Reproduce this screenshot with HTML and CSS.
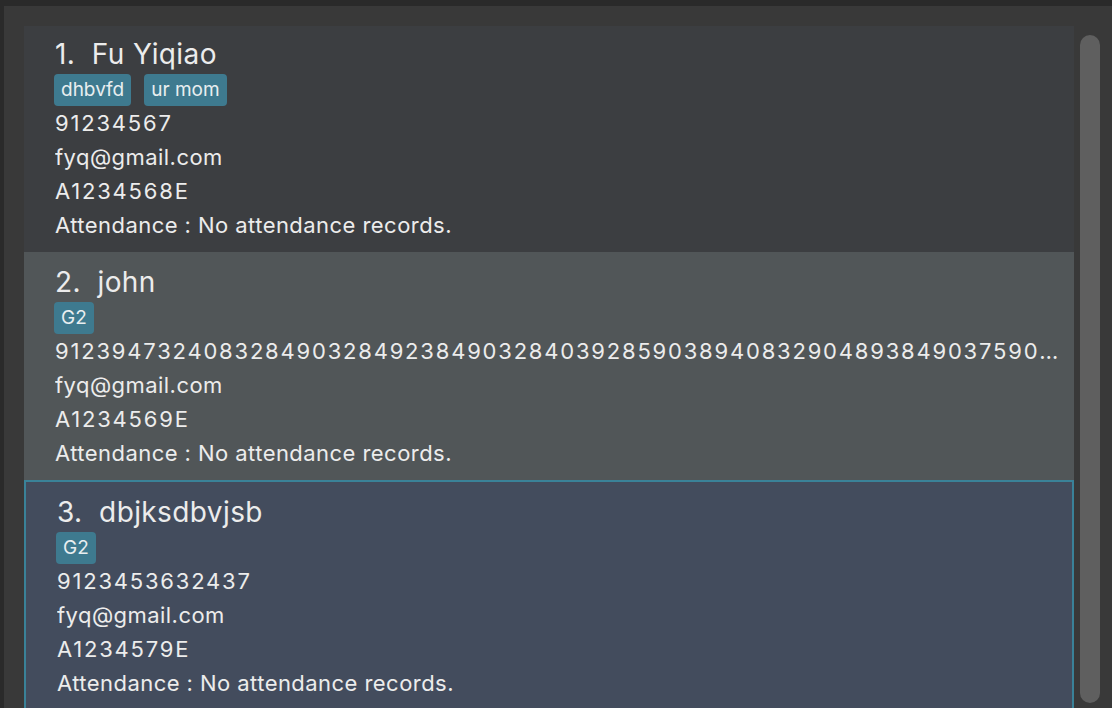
FILE: index.html
```html
<!DOCTYPE html>
<html lang="en">
<head>
<meta charset="utf-8">
<title>Person list</title>
<link rel="stylesheet" href="styles.css">
</head>
<body>
<div class="window">
  <div class="panel">
    <div class="list">
      <div class="card">
        <div class="name">1.&nbsp; Fu Yiqiao</div>
        <div class="tags"><span class="tag">dhbvfd</span><span class="tag">ur mom</span></div>
        <div class="line num">91234567</div>
        <div class="line">fyq@gmail.com</div>
        <div class="line num">A1234568E</div>
        <div class="line">Attendance : No attendance records.</div>
      </div>
      <div class="card alt">
        <div class="name">2.&nbsp; john</div>
        <div class="tags"><span class="tag">G2</span></div>
        <div class="line num">91239473240832849032849238490328403928590389408329048938490375904328904832904832</div>
        <div class="line">fyq@gmail.com</div>
        <div class="line num">A1234569E</div>
        <div class="line">Attendance : No attendance records.</div>
      </div>
      <div class="card selected">
        <div class="name">3.&nbsp; dbjksdbvjsb</div>
        <div class="tags"><span class="tag">G2</span></div>
        <div class="line num">9123453632437</div>
        <div class="line">fyq@gmail.com</div>
        <div class="line num">A1234579E</div>
        <div class="line">Attendance : No attendance records.</div>
      </div>
    </div>
    <div class="scroll">
      <div class="thumb"></div>
    </div>
  </div>
</div>
</body>
</html>
```
FILE: styles.css
```css
html, body {
  margin: 0;
  padding: 0;
  height: 708px;
  overflow: hidden;
  background: #2a2a2a;
  font-family: Inter, "Liberation Sans", sans-serif;
  font-feature-settings: "calt" 0;
  color: #ececec;
}
.window {
  margin: 6px 0 0 4px;
  height: 702px;
  background: #393939;
  overflow: hidden;
}
.panel {
  display: flex;
  padding: 20px 0 0 20px;
  height: 100%;
  box-sizing: border-box;
}
.list {
  width: 1050px;
  flex: none;
  display: flex;
  flex-direction: column;
}
.card {
  background: #3c3e41;
  padding: 11px 11px 10px 31px;
  min-width: 0;
}
.card:first-child {
  padding-top: 9px;
}
.card.alt {
  background: #515658;
}
.card.selected {
  background: #434c5d;
  border: 2px solid #3a8298;
  padding-left: 31px;
  padding-top: 11px;
}
.name {
  font-size: 28px;
  line-height: 39px;
  letter-spacing: 0.4px;
  white-space: nowrap;
}
.tags {
  display: flex;
  gap: 13px;
  height: 32px;
  margin-left: -1px;
}
.tag {
  background: #3e7a8f;
  border-radius: 4px;
  font-size: 19px;
  line-height: 32px;
  padding: 0 7px;
  color: #e8eef0;
}
.line {
  font-size: 22px;
  line-height: 34px;
  letter-spacing: 0.45px;
  white-space: nowrap;
  overflow: hidden;
  text-overflow: ellipsis;
}
.line.num {
  letter-spacing: 1.8px;
}
.scroll {
  flex: 1;
  padding: 9px 0 0 6px;
}
.thumb {
  width: 20px;
  height: 668px;
  background: #5f5f5f;
  border-radius: 10px;
}
```
